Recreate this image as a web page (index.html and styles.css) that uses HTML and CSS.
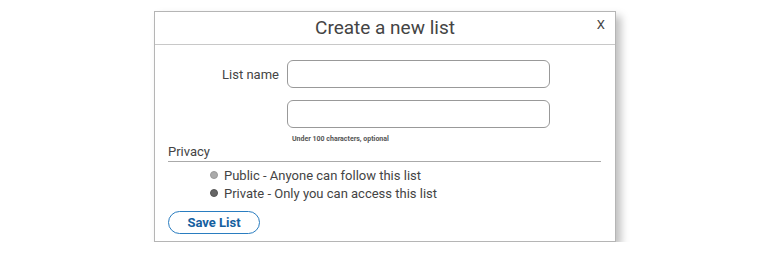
FILE: index.html
```html
<!DOCTYPE html>
<html lang="en">
<head>
    <meta charset="UTF-8">
    <title>Create a new list</title>
    <link rel="stylesheet" href="styles.css">
</head>
<body>
    <div class="dialog">
        <div class="dialog-header">
            <h1>Create a new list</h1>
            <span class="close">X</span>
        </div>

        <form class="dialog-body">
            <div class="field">
                <label for="listName">List name</label>
                <input type="text" id="listName">
            </div>

            <div class="field">
                <span></span>
                <div>
                    <textarea id="listDesc"></textarea>
                    <div class="hint">Under 100 characters, optional</div>
                </div>
            </div>

            <div class="privacy">Privacy</div>

            <ul class="options">
                <li><span class="dot"></span>Public - Anyone can follow this list</li>
                <li><span class="dot checked"></span>Private - Only you can access this list</li>
            </ul>

            <button type="button">Save List</button>
        </form>
    </div>
</body>
</html>
```

FILE: styles.css
```css
body {
    margin: 0;
    padding-top: 11px;
    font-family: Roboto, "Noto Sans", sans-serif;
    color: #444;
    background: #fff;
}
.dialog {
    width: 460px;
    margin: 0 auto;
    border: 1px solid #b5b5b5;
    background: #fff;
    box-shadow: 5px 5px 8px rgba(0,0,0,0.25);
}
.dialog-header {
    position: relative;
    height: 32px;
    border-bottom: 1px solid #c8c8c8;
    text-align: center;
}
.dialog-header h1 {
    margin: 0;
    font-size: 19px;
    font-weight: normal;
    line-height: 32px;
    color: #444;
}
.close {
    position: absolute;
    right: 10px;
    top: 5px;
    font-size: 13px;
    color: #444;
}
.dialog-body {
    padding: 15px 14px 7px 13px;
}
.field {
    display: grid;
    grid-template-columns: 111px 263px;
    column-gap: 8px;
    align-items: center;
    margin-bottom: 12px;
}
.field label {
    text-align: right;
    font-size: 13px;
}
input, textarea {
    display: block;
    width: 263px;
    height: 28px;
    margin: 0;
    padding: 0 6px;
    border: 1px solid #999;
    border-radius: 6px;
    box-sizing: border-box;
    resize: none;
    font-family: inherit;
}
.hint {
    margin: 7px 0 0 5px;
    font-size: 7px;
    font-weight: bold;
    color: #555;
}
.privacy {
    margin-top: -11px;
    padding-bottom: 2px;
    border-bottom: 1px solid #aaa;
    font-size: 13px;
}
.options {
    list-style: none;
    margin: 4px 0 0 42px;
    padding: 0;
}
.options li {
    display: flex;
    align-items: center;
    height: 18px;
    font-size: 13px;
}
.dot {
    width: 6px;
    height: 6px;
    margin-right: 6px;
    border-radius: 50%;
    background: #aaa;
    border: 1px solid #999;
}
.dot.checked {
    background: #666;
    border-color: #555;
}
button {
    margin-top: 9px;
    width: 92px;
    height: 23px;
    border: 1px solid #2a7dc0;
    border-radius: 12px;
    background: #fff;
    color: #15609f;
    font-family: inherit;
    font-size: 13px;
    font-weight: bold;
}
```
